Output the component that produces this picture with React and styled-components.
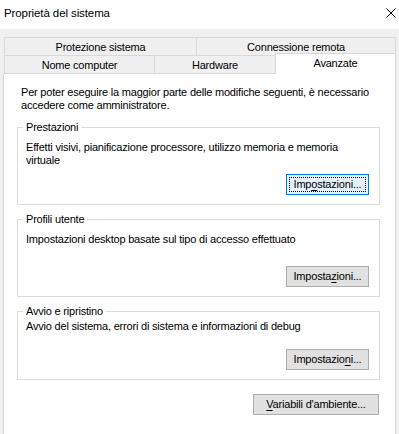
import React from 'react';
import styled, { createGlobalStyle, css } from 'styled-components';

const GlobalStyle = createGlobalStyle`
  html, body {
    margin: 0;
    padding: 0;
    background: #f0f0f0;
  }
  body {
    font-family: "Liberation Sans", Arial, sans-serif;
    font-size: 11px;
    letter-spacing: -0.2px;
    color: #000;
  }
`;

const Window = styled.div`
  width: 399px;
  height: 434px;
  overflow: hidden;
  display: flex;
  flex-direction: column;
  background: #f0f0f0;
`;

const TitleBar = styled.div`
  height: 29px;
  flex: none;
  background: #fff;
  display: flex;
  align-items: flex-start;
  justify-content: space-between;
  padding: 5px 0 0 4px;
  box-sizing: border-box;
  line-height: 16px;
  font-size: 11.5px;
  letter-spacing: -0.1px;
`;

const CloseButton = styled.div`
  width: 10px;
  height: 10px;
  margin: 3px 3px 0 0;
  display: flex;
`;

const Body = styled.div`
  flex: 1;
  display: flex;
  flex-direction: column;
  padding: 8px 3px 0 3px;
  min-height: 0;
`;

const TabRow = styled.div`
  display: flex;
  align-items: flex-end;
  height: 18px;
  margin: 0 1px;
`;

const Tab = styled.div`
  box-sizing: border-box;
  width: ${p => p.$w}px;
  flex: none;
  height: 18px;
  display: flex;
  align-items: center;
  justify-content: center;
  background: #f0f0f0;
  border-top: 1px solid #d9d9d9;
  border-left: 1px solid #d9d9d9;
  ${p => p.$last && css`border-right: 1px solid #d9d9d9;`}
  white-space: nowrap;

  ${p => p.$active && css`
    background: #fff;
    height: 21px;
    margin-top: -2px;
    margin-bottom: -1px;
    padding-bottom: 3px;
    position: relative;
    z-index: 1;
    border-right: 1px solid #d9d9d9;
  `}
`;

const Panel = styled.div`
  flex: 1;
  background: #fff;
  border: 1px solid #d9d9d9;
  border-bottom: none;
  padding: 12px 15px 0 13px;
  display: flex;
  flex-direction: column;
`;

const Intro = styled.p`
  margin: 0 0 9px 4px;
  line-height: 13px;
  white-space: pre;
`;

const GroupBox = styled.fieldset`
  margin: ${p => (p.$first ? 0 : 8)}px 0 0 0;
  padding: ${p => p.$padTop}px 10px 9px 8px;
  border: 1px solid #dcdcdc;
  display: flex;
  flex-direction: column;
  min-width: 0;
`;

const Legend = styled.legend`
  padding: 0 3px;
  margin-left: -3px;
  line-height: 13px;
`;

const Description = styled.div`
  line-height: 13px;
  min-height: ${p => p.$h}px;
  margin-bottom: 7px;
  white-space: pre;
`;

const Button = styled.button`
  align-self: flex-end;
  box-sizing: border-box;
  width: ${p => p.$w}px;
  height: 21px;
  padding: 0;
  font: inherit;
  letter-spacing: inherit;
  color: #000;
  background: #e1e1e1;
  border: 1px solid #adadad;
  position: relative;
  line-height: 19px;

  ${p => p.$focused && css`
    background: #e5f1fb;
    border-color: #0078d7;
    &::after {
      content: '';
      position: absolute;
      inset: 2px;
      border: 1px dotted #000;
    }
  `}

  u {
    text-decoration: underline;
    text-underline-offset: 2px;
  }
`;

const Footer = styled.div`
  display: flex;
  justify-content: flex-end;
  margin: 14px 1px 0 0;
`;

const Mnemonic = ({ text, at }) => (
  <>
    {text.slice(0, at)}
    <u>{text[at]}</u>
    {text.slice(at + 1)}
  </>
);

const groups = [
  {
    title: 'Prestazioni',
    text: 'Effetti visivi, pianificazione processore, utilizzo memoria e memoria\nvirtuale',
    padTop: 7,
    h: 26,
    key: 3,
    focused: true
  },
  {
    title: 'Profili utente',
    text: 'Impostazioni desktop basate sul tipo di accesso effettuato',
    padTop: 7,
    h: 26,
    key: 7
  },
  {
    title: 'Avvio e ripristino',
    text: 'Avvio del sistema, errori di sistema e informazioni di debug',
    padTop: 2,
    h: 22,
    key: 10
  }
];

const App = () => (
  <Window>
    <GlobalStyle />
    <TitleBar>
      <span>Proprietà del sistema</span>
      <CloseButton>
        <svg width="10" height="10" viewBox="0 0 10 10">
          <path d="M0.5 0.5 L9.5 9.5 M9.5 0.5 L0.5 9.5" stroke="#000" strokeWidth="1" fill="none" />
        </svg>
      </CloseButton>
    </TitleBar>
    <Body>
      <TabRow>
        <Tab $w={192}>Protezione sistema</Tab>
        <Tab $w={200} $last>Connessione remota</Tab>
      </TabRow>
      <TabRow>
        <Tab $w={150}>Nome computer</Tab>
        <Tab $w={121}>Hardware</Tab>
        <Tab $w={121} $active>Avanzate</Tab>
      </TabRow>
      <Panel>
        <Intro>
          {'Per poter eseguire la maggior parte delle modifiche seguenti, è necessario\naccedere come amministratore.'}
        </Intro>
        {groups.map((g, i) => (
          <GroupBox key={g.title} $first={i === 0} $padTop={g.padTop}>
            <Legend>{g.title}</Legend>
            <Description $h={g.h}>{g.text}</Description>
            <Button $w={83} $focused={g.focused}>
              <Mnemonic text="Impostazioni..." at={g.key} />
            </Button>
          </GroupBox>
        ))}
        <Footer>
          <Button $w={126}>
            <Mnemonic text="Variabili d'ambiente..." at={0} />
          </Button>
        </Footer>
      </Panel>
    </Body>
  </Window>
);

export default App;
